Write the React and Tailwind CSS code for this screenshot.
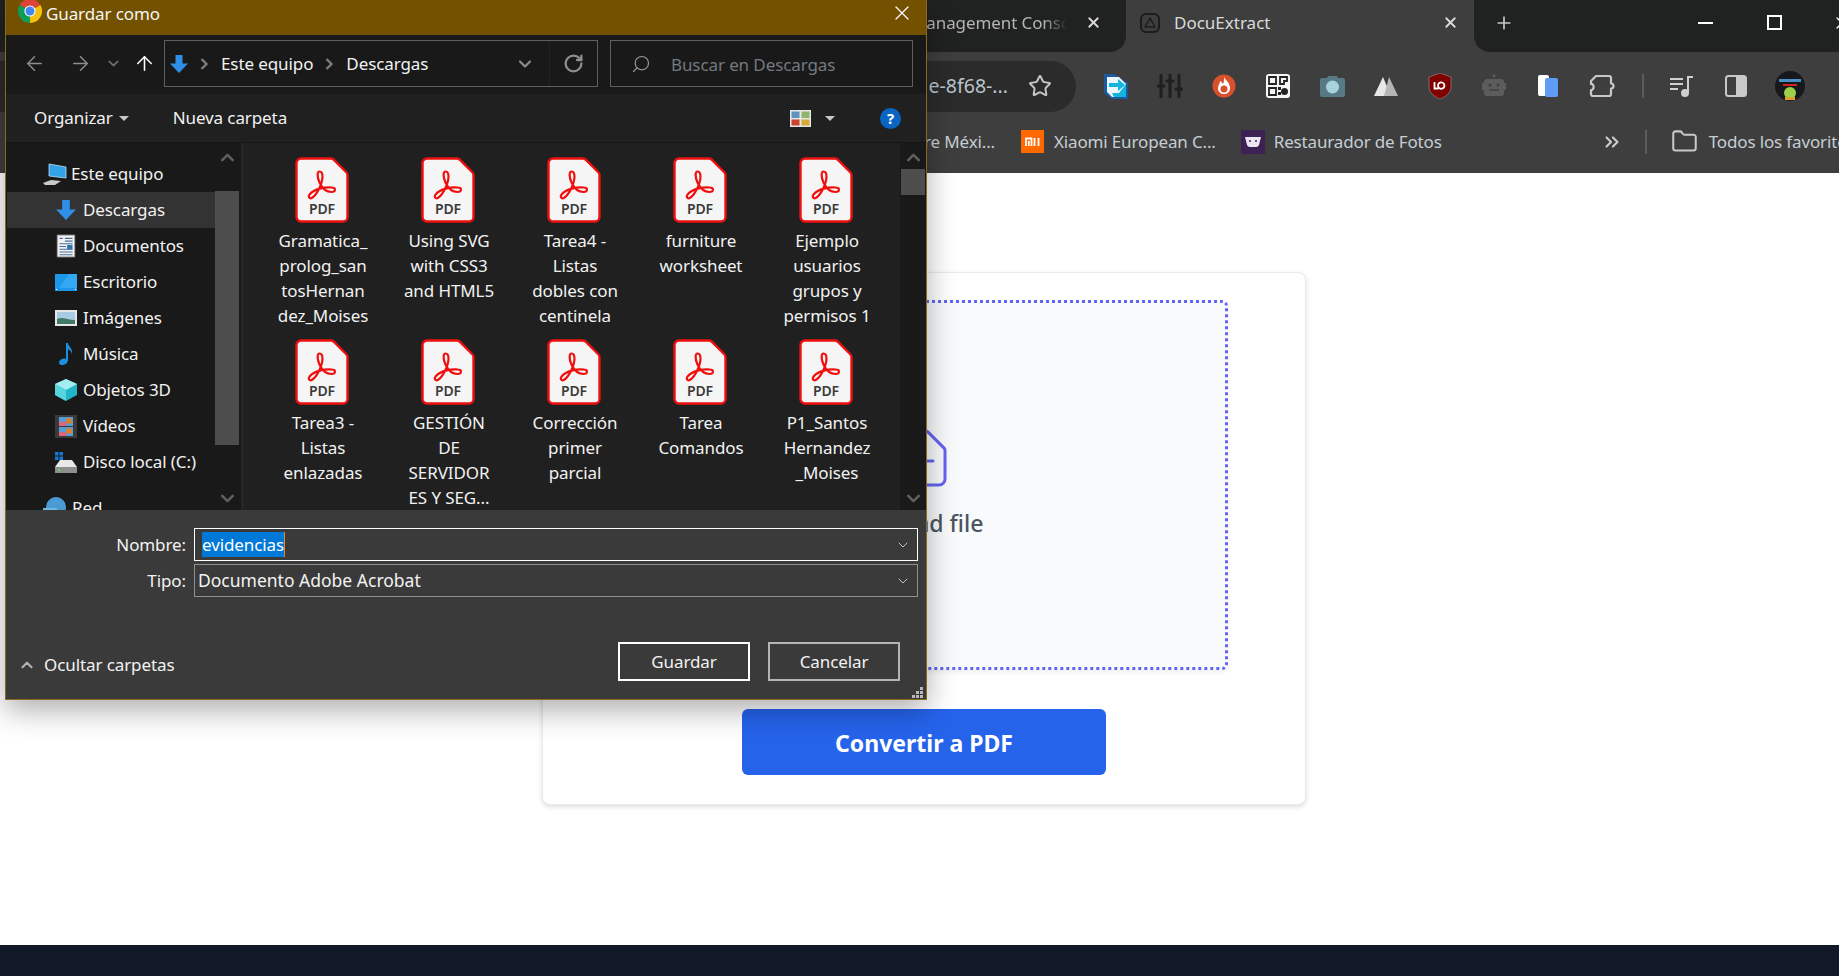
import { ArrowLeft, ArrowRight, ArrowUp, ChevronDown, ChevronUp, ChevronsRight, Folder, Plus, RotateCw, Search, Star, X } from "lucide-react";

const FILES = [
  ["Gramatica_", "prolog_san", "tosHernan", "dez_Moises"],
  ["Using SVG", "with CSS3", "and HTML5"],
  ["Tarea4 -", "Listas", "dobles con", "centinela"],
  ["furniture", "worksheet"],
  ["Ejemplo", "usuarios", "grupos y", "permisos 1"],
  ["Tarea3 -", "Listas", "enlazadas"],
  ["GESTIÓN", "DE", "SERVIDOR", "ES Y SEG..."],
  ["Corrección", "primer", "parcial"],
  ["Tarea", "Comandos"],
  ["P1_Santos", "Hernandez", "_Moises"],
];

const DownIcon = ({ size = 22 }) => (
  <svg width={size} height={size} viewBox="0 0 20 20">
    <path d="M6.500 1h7v8.500H19L10 19 1 9.500h5.500z" fill="#2f8fe6" />
  </svg>
);

const PLACES = [
  ["Descargas", <DownIcon />],
  ["Documentos", (
    <svg width="22" height="24" viewBox="0 0 18 22">
      <path d="M1 1h16v20H1z" fill="#f2f2f2" stroke="#9a9a9a" strokeWidth="0.8" />
      <path d="M3 4h3M8 4h7M8 6.500h7M3 9h12M3 11.500h6M3 14h12M3 16.500h12M3 19h12" stroke="#4a6c9a" strokeWidth="1" />
      <path d="M10 10h5v4h-5z" fill="#2e74b5" />
    </svg>
  )],
  ["Escritorio", (
    <svg width="22" height="17" viewBox="0 0 22 17">
      <path d="M0 0h22v17H0z" fill="#1c97ea" />
      <path d="M14 0h8v14H4z" fill="#33a8f2" />
      <path d="M1 15.500h1M20 15.500h1" stroke="#fff" />
    </svg>
  )],
  ["Imágenes", (
    <svg width="22" height="16" viewBox="0 0 22 16">
      <path d="M0 0h22v16H0z" fill="#e6e6e6" />
      <path d="M2 2h18v12H2z" fill="#a9cbe3" />
      <path d="M2 9c5-3 10 1 18 1v4H2z" fill="#3f7a6a" />
    </svg>
  )],
  ["Música", (
    <svg width="22" height="24" viewBox="0 0 22 24">
      <path d="M11 1h2c.5 4 5 5 4 11-1-3-2-4-4-4.500V18c0 3-3 5-6 5-2.500 0-3.500-2-2.500-4 1-2 4-3 6.500-2z" fill="#1a8fdf" />
    </svg>
  )],
  ["Objetos 3D", (
    <svg width="22" height="22" viewBox="0 0 22 22">
      <path d="M11 0l11 5v11l-11 6-11-6V5z" fill="#1fb6c9" />
      <path d="M11 0l11 5-11 6L0 5z" fill="#a5eef0" />
      <path d="M0 5l11 6v11L0 16z" fill="#57d5de" />
    </svg>
  )],
  ["Vídeos", (
    <svg width="22" height="23" viewBox="0 0 22 23">
      <path d="M0 0h22v23H0z" fill="#3a3a3a" />
      <path d="M4 2h14v9H4z" fill="#5b9bd5" />
      <path d="M4 12h14v9H4z" fill="#5b9bd5" />
      <path d="M4 7h7v4H4zM4 17h7v4H4z" fill="#e0647a" />
      <circle cx="14" cy="6" r="3" fill="#d9822b" />
      <circle cx="14" cy="16" r="3" fill="#d9822b" />
    </svg>
  )],
  ["Disco local (C:)", (
    <svg width="22" height="22" viewBox="0 0 22 22">
      <path d="M0 1h3.500v3.500H0zM4.500 1H8v3.500H4.500zM0 5.500h3.500V9H0zM4.500 5.500H8V9H4.500z" fill="#1678d6" />
      <path d="M5 9h12l5 7H0z" fill="#e8e8e8" />
      <path d="M0 16h22v6H0z" fill="#8e8e8e" />
      <path d="M3 18h2v2H3z" fill="#4ce04c" />
    </svg>
  )],
];

const EXTENSIONS = [
  <svg key="a" width="24" height="26" viewBox="0 0 24 26">
    <path d="M0 1h10l14 9v16H8L0 20z" fill="#1b5a9e" />
    <path d="M3 4h12l7 7v13H8l-5-5z" fill="#eaf6fb" />
    <path d="M22 11v13H10l-2-4h7z" fill="#14b4dc" />
    <path d="M5 10h9V6l7 6-7 6v-4H5z" fill="#14b4dc" />
  </svg>,
  <svg key="b" width="26" height="24" viewBox="0 0 26 24" fill="none" stroke="#1f1f1f" strokeWidth="3" strokeLinecap="round">
    <path d="M4 1v22M13 1v22M22 1v22" />
    <path d="M1 12h6M10 7h6M19 15h6" />
  </svg>,
  <svg key="c" width="24" height="24" viewBox="0 0 24 24">
    <circle cx="12" cy="12" r="11.500" fill="#d9512c" />
    <path d="M12 3c1 3 6 5 6 11 0 4-3 6-6 6s-6-2-6-6c0-3 2-4 2-7 2 1 2 2 3 3 1-2 1-4 1-7z" fill="#fff" />
    <circle cx="12" cy="15" r="3.500" fill="#d9512c" />
  </svg>,
  <svg key="d" width="24" height="24" viewBox="0 0 24 24">
    <rect width="24" height="24" rx="3" fill="#f5f5f5" />
    <path d="M3 3h7v7H3zM14 3h7v4h-3v3h-4zM3 14h7v7H3z" fill="none" stroke="#222" strokeWidth="1.800" />
    <path d="M12 13h3v3h-3zM12 18h3v3h-3z" fill="#222" />
    <circle cx="18.500" cy="17.500" r="3.500" fill="#222" />
  </svg>,
  <svg key="e" width="25" height="24" viewBox="0 0 25 24">
    <path d="M8 2h9l1 2h5a2 2 0 012 2v15a2 2 0 01-2 2H2a2 2 0 01-2-2V6a2 2 0 012-2h5z" fill="#587a86" />
    <circle cx="12.500" cy="13" r="6.500" fill="#a7d3dd" />
  </svg>,
  <svg key="f" width="24" height="24" viewBox="0 0 24 24">
    <path d="M9 3l8 19H0z" fill="#e8e8e8" />
    <path d="M15 3l9 19H10z" fill="#b5b5b5" />
  </svg>,
  <svg key="g" width="24" height="26" viewBox="0 0 24 26">
    <path d="M12 0l11 4v10c0 6-6 10-11 12C7 24 1 20 1 14V4z" fill="#800000" stroke="#9a9a9a" strokeWidth="0.600" />
    <path d="M6.500 9v6.500h4M14 9.500a3.200 3.200 0 100 6.200 3.200 3.200 0 000-6.200z" fill="none" stroke="#fff" strokeWidth="1.800" />
  </svg>,
  <svg key="h" width="24" height="24" viewBox="0 0 24 24">
    <circle cx="12" cy="1.800" r="1.500" fill="#5c5c5c" />
    <path d="M5 5h14a3 3 0 013 3v1h2v7h-2v3a3 3 0 01-3 3H5a3 3 0 01-3-3v-3H0V9h2V8a3 3 0 013-3z" fill="#5c5c5c" />
    <circle cx="8" cy="11" r="1.500" fill="#3e3e3e" />
    <circle cx="16" cy="11" r="1.500" fill="#3e3e3e" />
    <path d="M7 16h10" stroke="#3e3e3e" strokeWidth="1.500" />
  </svg>,
  <svg key="i" width="20" height="22" viewBox="0 0 20 22">
    <rect x="0" y="0" width="11" height="21" rx="2" fill="#fff" />
    <rect x="7" y="3" width="13" height="19" rx="2" fill="#5e9cf5" />
  </svg>,
  <svg key="j" width="26" height="24" viewBox="0 0 26 24" fill="none" stroke="#c9c9c9" strokeWidth="2.200" strokeLinejoin="round">
    <path d="M7 2h13a2 2 0 012 2v5.500a2.500 2.500 0 010 5V20a2 2 0 01-2 2H4a2 2 0 01-2-2v-4c3.500.5 3.500-6.500 0-6V7z" />
  </svg>,
];

const PdfIcon = () => (
  <svg width="54" height="66" viewBox="0 0 54 66">
    <path d="M6 1.500h30c1 0 1.800.4 2.500 1l12.500 12.500c.8.800 1.500 1.700 1.500 3V60a4.500 4.500 0 01-4.500 4.500H6A4.500 4.500 0 011.500 60V6A4.500 4.500 0 016 1.500z" fill="#f5f5f5" stroke="#f00f0f" strokeWidth="2.400" />
    <path d="M24.500 14.500c-2.500 0-2.500 5.500 0 11 3 6.500 7 9.500 12 9.500 4.500 0 4.500-4.500.5-4.500-7-.8-18 1.500-22 6.500-2.500 3-.5 5.500 2.500 3.500 4.500-3 10-14 10-21 0-3.500-1.200-5-3-5z" fill="none" stroke="#f00f0f" strokeWidth="2.200" />
    <text x="27" y="57" textAnchor="middle" fontSize="14" fontWeight="600" fill="#3a3a3a" style={{ fontFamily: "'Noto Sans', sans-serif" }}>PDF</text>
  </svg>
);

const ChromeLogo = () => (
  <svg width="24" height="24" viewBox="0 0 24 24">
    <path d="M12 12L1.600 6A12 12 0 0122.400 6z" fill="#db4437" />
    <path d="M12 12L22.400 6A12 12 0 0112 24z" fill="#f4c20d" />
    <path d="M12 12L12 24A12 12 0 011.600 6z" fill="#0f9d58" />
    <circle cx="12" cy="12" r="5.600" fill="#fff" />
    <circle cx="12" cy="12" r="4.500" fill="#4285f4" />
  </svg>
);

function Chrome() {
  return (
    <header className="h-[173px] shrink-0 bg-[#3e3e3e] overflow-hidden text-[17px]">
      {/* TABS */}
      <div className="h-[52px] flex">
        <div className="w-[1126px] shrink-0 bg-[#202221] rounded-br-[16px] flex items-center justify-end pb-[7px]">
          <span className="w-[156px] overflow-hidden whitespace-nowrap tracking-[-0.1px] text-[#b4b4b4] [mask-image:linear-gradient(to_right,black_85%,transparent)]">Management Console</span>
          <X size={17} strokeWidth={2.5} className="ml-[18px] mr-[24px] text-[#dcdcdc]" />
        </div>
        <div className="w-[348px] shrink-0 rounded-t-[14px] flex items-center pl-[14px] pr-[15px] pb-[7px]">
          <span className="w-[20px] h-[20px] rounded-[6px] border-2 border-[#1c1c1c] flex items-center justify-center">
            <svg width="12" height="11" viewBox="0 0 12 11"><path d="M6 1l5 9H1z" fill="none" stroke="#1c1c1c" strokeWidth="1.500" strokeLinejoin="round" /></svg>
          </span>
          <span className="ml-[14px] text-[#dadada]">DocuExtract</span>
          <X size={17} strokeWidth={2.5} className="ml-auto text-[#dcdcdc]" />
        </div>
        <div className="flex-1 bg-[#202221] rounded-bl-[16px] flex items-center pb-[7px]">
          <Plus size={20} strokeWidth={2} className="ml-[20px] shrink-0 text-[#c8c8c8]" />
          <span className="ml-[184px] w-[15px] h-[2px] shrink-0 bg-white" />
          <span className="ml-[54px] w-[15px] h-[15px] shrink-0 border-2 border-white" />
          <X size={20} strokeWidth={1.5} className="ml-[50px] shrink-0 text-white" />
        </div>
      </div>
      {/* TOOLBAR */}
      <div className="h-[68px] flex items-center">
        <div className="w-[1076px] h-[51px] shrink-0 bg-[#2b2b2b] rounded-r-full flex items-center justify-end pr-[24px]">
          <span className="text-[19.500px] text-[#b9c4cc] mr-[20px]">e-8f68-...</span>
          <Star size={24} strokeWidth={2} className="text-[#c4c4c4]" />
        </div>
        <div className="flex ml-[13px]">
          {EXTENSIONS.map((icon) => (
            <span key={icon.key} className="w-[54px] flex items-center justify-center">{icon}</span>
          ))}
        </div>
        <span className="ml-[13px] w-[2px] h-[24px] bg-[#5c5c5c]" />
        <div className="flex ml-[11px]">
          <span className="w-[54px] flex items-center justify-center">
            <svg width="24" height="22" viewBox="0 0 24 22" fill="none" stroke="#d0d0d0" strokeWidth="2">
              <path d="M0 4h13M0 9h13M0 14h8" />
              <path d="M18 18V2h5" />
              <circle cx="15" cy="18" r="3" fill="#d0d0d0" />
            </svg>
          </span>
          <span className="w-[54px] flex items-center justify-center">
            <svg width="22" height="22" viewBox="0 0 22 22">
              <rect x="1" y="1" width="20" height="20" rx="2.500" fill="#3e3e3e" stroke="#c9c9c9" strokeWidth="2" />
              <path d="M11 1h8a2 2 0 012 2v16a2 2 0 01-2 2h-8z" fill="#c9c9c9" />
            </svg>
          </span>
          <span className="w-[54px] flex items-center justify-center">
            <svg width="30" height="30" viewBox="0 0 30 30">
              <circle cx="15" cy="15" r="15" fill="#17181c" />
              <path d="M4 8h22v3H4z" fill="#4a90c8" />
              <path d="M8 13h14v2H8z" fill="#d02020" />
              <circle cx="15" cy="22" r="6" fill="#9ad04a" />
              <path d="M10 26h10v3H10z" fill="#e0a030" />
            </svg>
          </span>
        </div>
      </div>
      {/* BOOKMARKS */}
      <div className="h-[53px] pb-[10px] flex items-center text-[#c6ced4] whitespace-nowrap tracking-[-0.15px]">
        <div className="w-[1021px] shrink-0 flex justify-end pr-[26px]">re Méxi...</div>
        <span className="w-[23px] h-[23px] bg-[#ff6900] flex items-center justify-center shrink-0">
          <svg width="15" height="10" viewBox="0 0 15 10" fill="none" stroke="#fff" strokeWidth="1.800"><path d="M1 9V1.500h5.500V9M3.800 4v5M9.500 1v8M13.500 1v8" /></svg>
        </span>
        <span className="ml-[10px]">Xiaomi European C...</span>
        <span className="ml-[25px] w-[24px] h-[24px] bg-[#3d2154] flex items-center justify-center shrink-0">
          <svg width="18" height="12" viewBox="0 0 18 12"><path d="M1 1h16l-2 8a3 3 0 01-3 2H6a3 3 0 01-3-2z" fill="#ece6f2" /><circle cx="6" cy="5" r="1" fill="#3d2154" /><circle cx="12" cy="5" r="1" fill="#3d2154" /></svg>
        </span>
        <span className="ml-[9px]">Restaurador de Fotos</span>
        <ChevronsRight size={22} strokeWidth={2.2} className="ml-[159px] shrink-0 text-[#d0d0d0]" />
        <span className="ml-[22px] w-[2px] h-[24px] bg-[#5c5c5c] shrink-0" />
        <Folder size={27} strokeWidth={1.8} className="ml-[24px] shrink-0 text-[#c9c9c9]" />
        <span className="ml-[11px]">Todos los favoritos</span>
      </div>
    </header>
  );
}

const ChevronRightSmall = ({ className }) => (
  <svg className={className} width="9" height="12" viewBox="0 0 9 12" fill="none" stroke="#7c7c7c" strokeWidth="2.400">
    <path d="M1.500 1l5 5-5 5" />
  </svg>
);

function SaveDialog() {
  return (
    <div className="absolute left-[5px] top-0 w-[922px] h-[700px] border-x border-b border-[#8a6a1e] flex flex-col shadow-[0_10px_28px_rgba(0,0,0,0.32)] text-[17px] tracking-[-0.1px] text-[#f2f2f2] z-10">
      {/* TITLE */}
      <div className="h-[35px] shrink-0 bg-[#735100] flex items-start relative">
        <div className="ml-[12px] -mt-[1px]"><ChromeLogo /></div>
        <span className="ml-[4px] mt-[1px] text-[#f6f6f6]">Guardar como</span>
        <X size={24} strokeWidth={1.2} className="absolute right-[12px] top-[1px] text-white" />
      </div>
      {/* NAV */}
      <div className="h-[59px] shrink-0 bg-[#191919] flex items-start pt-[5px]">
        <div className="w-[158px] h-[47px] shrink-0 flex items-center pl-[17px]">
          <ArrowLeft size={23} strokeWidth={1.5} className="text-[#8e8e8e]" />
          <ArrowRight size={23} strokeWidth={1.5} className="ml-[23px] text-[#8e8e8e]" />
          <ChevronDown size={17} strokeWidth={2.4} className="ml-[13px] text-[#6e6e6e]" />
          <ArrowUp size={23} strokeWidth={1.6} className="ml-[11px] text-white" />
        </div>
        <div className="w-[434px] h-[47px] shrink-0 border border-[#5f5f5f] flex items-center pl-[4px]">
          <DownIcon size={20} />
          <ChevronRightSmall className="ml-[11px]" />
          <span className="ml-[12px]">Este equipo</span>
          <ChevronRightSmall className="ml-[12px]" />
          <span className="ml-[12px]">Descargas</span>
          <ChevronDown size={20} strokeWidth={2.6} className="ml-auto text-[#8e8e8e]" />
          <span className="w-[1px] h-[45px] bg-[#222] ml-[14px]" />
          <RotateCw size={21} strokeWidth={2.6} className="ml-[13px] mr-[13px] text-[#8e8e8e]" />
        </div>
        <div className="w-[303px] h-[47px] ml-[12px] shrink-0 border border-[#5f5f5f] flex items-center pl-[20px] text-[#737a80]">
          <Search size={20} strokeWidth={1.4} className="-scale-x-100 text-[#9a9a9a]" />
          <span className="ml-[20px] pt-[2px]">Buscar en Descargas</span>
        </div>
      </div>
      {/* ACTIONS */}
      <div className="h-[49px] shrink-0 bg-[#202020] border-b border-[#151515] flex items-center">
        <span className="ml-[28px]">Organizar</span>
        <span className="ml-[6px] border-x-[5px] border-x-transparent border-t-[5px] border-t-[#c8c8c8]" />
        <span className="ml-[44px]">Nueva carpeta</span>
        <svg className="ml-auto" width="21" height="17" viewBox="0 0 21 17">
          <path d="M0 0h21v17H0z" fill="#e6e6e6" />
          <path d="M1.500 1.500h8v6.500h-8z" fill="#5e93c2" />
          <path d="M11.500 1.500h8v6.500h-8z" fill="#8fb56a" />
          <path d="M1.500 9.500h8v6h-8z" fill="#c9432f" />
          <path d="M11.500 9.500h8v6h-8z" fill="#d9a93a" />
        </svg>
        <span className="ml-[14px] border-x-[5px] border-x-transparent border-t-[5px] border-t-[#c8c8c8]" />
        <span className="ml-[45px] mr-[25px] w-[21px] h-[21px] rounded-full bg-[#0a64c2] flex items-center justify-center text-[15px] font-bold text-white leading-none">?</span>
      </div>
      {/* BODY */}
      <div className="h-[367px] shrink-0 flex overflow-hidden">
        <div className="w-[209px] shrink-0 bg-[#191919] pt-[13px] overflow-hidden">
          <div className="h-[36px] flex items-center pl-[37px]">
            <svg width="24" height="22" viewBox="0 0 24 22">
              <path d="M6 1l17 3v11L6 13z" fill="#33a3e8" stroke="#bcdcf0" strokeWidth="0.800" />
              <path d="M0 20l8-3 10 1-6 4H2z" fill="#c9c9c9" />
            </svg>
            <span className="ml-[4px]">Este equipo</span>
          </div>
          {PLACES.map(([name, icon]) => (
            <div key={name} className={`h-[36px] flex items-center ${name === "Descargas" ? "bg-[#333333] ml-[1px] pl-[48px]" : "pl-[49px]"}`}>
              <span className="w-[22px] flex justify-center shrink-0">{icon}</span>
              <span className="ml-[6px] whitespace-nowrap">{name}</span>
            </div>
          ))}
          <div className="h-[36px] mt-[10px] flex items-center pl-[37px]">
            <svg width="24" height="24" viewBox="0 0 24 24">
              <circle cx="13" cy="11" r="10" fill="#4a9ad4" />
              <path d="M0 12h14v10H0z" fill="#6fb7e6" />
            </svg>
            <span className="ml-[5px]">Red</span>
          </div>
        </div>
        <div className="w-[26px] shrink-0 bg-[#191919] flex flex-col items-start">
          <ChevronUp size={21} strokeWidth={3} className="ml-[2px] mt-[4px] text-[#5f5f5f]" />
          <span className="mt-[23px] w-[24px] h-[254px] bg-[#4d4d4d]" />
          <ChevronDown size={21} strokeWidth={3} className="ml-[2px] mt-[43px] text-[#5f5f5f]" />
        </div>
        <span className="w-[3px] shrink-0 bg-[#262626]" />
        <div className="flex-1 bg-[#202020] pl-[16px] pt-[14px] grid grid-cols-[repeat(5,126px)] auto-rows-[182px] overflow-hidden">
          {FILES.map((lines) => (
            <div key={lines[0] + lines[1]} className="flex flex-col items-center">
              <div className="-ml-[2px]"><PdfIcon /></div>
              <div className="mt-[5px] text-center leading-[25px] whitespace-nowrap">
                {lines.map((line) => <div key={line}>{line}</div>)}
              </div>
            </div>
          ))}
        </div>
        <div className="w-[26px] shrink-0 bg-[#191919] flex flex-col items-center">
          <ChevronUp size={21} strokeWidth={3} className="mt-[4px] text-[#5f5f5f]" />
          <span className="mt-[1px] w-[24px] h-[26px] bg-[#4d4d4d]" />
          <ChevronDown size={21} strokeWidth={3} className="mt-[293px] text-[#5f5f5f]" />
        </div>
      </div>
      {/* FOOTER */}
      <div className="flex-1 bg-[#3a3a3a] pt-[18px] relative">
        <div className="flex items-center">
          <span className="w-[180px] text-right">Nombre:</span>
          <div className="ml-[8px] w-[724px] h-[33px] border border-white flex items-center pl-[7px] pr-[6px]">
            <span className="bg-[#0078d7] h-[25px] flex items-center text-white border-r border-[#e08a2c]">evidencias</span>
            <ChevronDown size={16} strokeWidth={1.3} className="ml-auto text-[#d8d8d8]" />
          </div>
        </div>
        <div className="flex items-center mt-[3px]">
          <span className="w-[180px] text-right">Tipo:</span>
          <div className="ml-[8px] w-[724px] h-[33px] border border-[#8f8f8f] flex items-center pl-[3px] pr-[6px]">
            <span className="text-[17.500px] tracking-normal">Documento Adobe Acrobat</span>
            <ChevronDown size={16} strokeWidth={1.3} className="ml-auto text-[#d8d8d8]" />
          </div>
        </div>
        <div className="flex items-center mt-[45px] pl-[12px] pr-[26px]">
          <ChevronUp size={18} strokeWidth={3} className="mt-[7px] text-[#b0b0b0]" />
          <span className="ml-[8px] mt-[7px]">Ocultar carpetas</span>
          <button className="ml-auto w-[132px] h-[39px] border-2 border-white">Guardar</button>
          <button className="ml-[18px] w-[132px] h-[39px] border-2 border-[#b4b4b4]">Cancelar</button>
        </div>
        <svg className="absolute right-[3px] bottom-[1px]" width="11" height="11" viewBox="0 0 11 11" fill="#b8b8b8">
          <path d="M8 0h3v3H8zM4 4h3v3H4zM8 4h3v3H8zM0 8h3v3H0zM4 8h3v3H4zM8 8h3v3H8z" />
        </svg>
      </div>
    </div>
  );
}

export default function App() {
  return (
    <div className="relative h-[976px] w-[1839px] overflow-hidden bg-white flex flex-col font-['Noto_Sans',sans-serif]">
      <Chrome />
      <main className="flex-1 flex justify-center pt-[99px] pl-[9px]">
        <div className="w-[764px] h-[533px] bg-white rounded-[8px] border border-[#e8eaee] shadow-[0_2px_5px_rgba(15,23,42,0.14)] flex flex-col items-center pt-[27px]">
          <div className="w-[608px] h-[370px] rounded-[6px] bg-[#f9fafb] border-[3px] border-dotted border-[#6366f1] shadow-[0_2px_4px_rgba(15,23,42,0.08)] flex flex-col items-center pt-[119px]">
            <svg width="72" height="72" viewBox="0 0 24 24" fill="none" stroke="#6366f1" strokeWidth="1" strokeLinecap="round" strokeLinejoin="round">
              <path d="M9 13h6m-3-3v6m5 5H7a2 2 0 01-2-2V5a2 2 0 012-2h5.586a1 1 0 01.707.293l5.414 5.414a1 1 0 01.293.707V19a2 2 0 01-2 2z" />
            </svg>
            <p className="mt-[12px] text-[23px] font-medium text-[#4b5563]">Upload file</p>
          </div>
          <button className="mt-[39px] w-[364px] h-[66px] rounded-[6px] bg-[#2563eb] text-white text-[23px] font-bold pt-[2px]">Convertir a PDF</button>
        </div>
      </main>
      <footer className="h-[31px] shrink-0 bg-[#111827]" />
      <SaveDialog />
    </div>
  );
}
